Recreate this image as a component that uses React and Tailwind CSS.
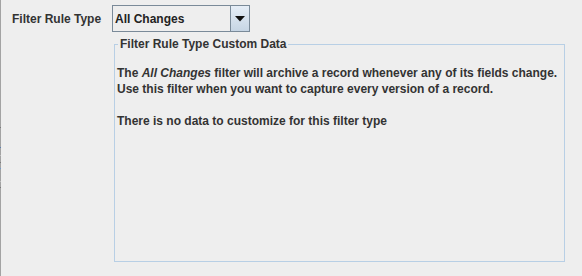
export default function App() {
  const font = { fontFamily: '"Liberation Sans", Arial, sans-serif' };
  return (
    <div className="w-[582px] h-[276px] bg-[#eeeeee] flex text-[#333333] font-bold text-[12px]" style={font}>
      <div className="w-px h-full bg-[#a3a3a3] relative">
        <div className="absolute left-0 top-[127px] w-px h-px bg-[#7a7a7a]" />
        <div className="absolute left-0 top-[147px] w-px h-px bg-[#5b7fb0]" />
        <div className="absolute left-0 top-[155px] w-px h-px bg-[#c0c0c0]" />
        <div className="absolute left-0 top-[162px] w-px h-px bg-[#7a7a7a]" />
        <div className="absolute left-0 top-[168px] w-px h-px bg-[#6c9ad0]" />
        <div className="absolute left-0 top-[181px] w-px h-px bg-[#c0c0c0]" />
        <div className="absolute left-0 top-[187px] w-px h-px bg-[#7a7a7a]" />
      </div>
      <div className="flex flex-col">
        <div className="flex items-center mt-[5px] h-[27px]">
          <div className="ml-[11px] w-[100px]">Filter Rule Type</div>
          <div className="flex w-[138px] h-[27px] border border-[#7a8a99] bg-[#eeeeee]">
            <div className="flex-1 flex items-center pl-[2px] text-[#222222]">All Changes</div>
            <div className="w-[19px] h-full border-l border-[#7a8a99] bg-gradient-to-b from-[#e6eef7] to-[#c6d5e4] flex items-center justify-center">
              <svg width="10" height="6" viewBox="0 0 10 6">
                <polygon points="0,0 10,0 5,5.5" fill="#111111" />
              </svg>
            </div>
          </div>
        </div>
        <fieldset className="ml-[113px] mt-[5px] w-[451px] h-[225px] border border-[#b8cfe5] p-0 m-0 min-w-0">
          <legend className="ml-[3px] px-[2px] leading-[15px]">Filter Rule Type Custom Data</legend>
          <div className="pl-[2px] pt-[13px] leading-[16px]">
            <div>The <i>All Changes</i> filter will archive a record whenever any of its fields change.</div>
            <div>Use this filter when you want to capture every version of a record.</div>
            <div className="h-[16px]" />
            <div>There is no data to customize for this filter type</div>
          </div>
        </fieldset>
      </div>
    </div>
  );
}
